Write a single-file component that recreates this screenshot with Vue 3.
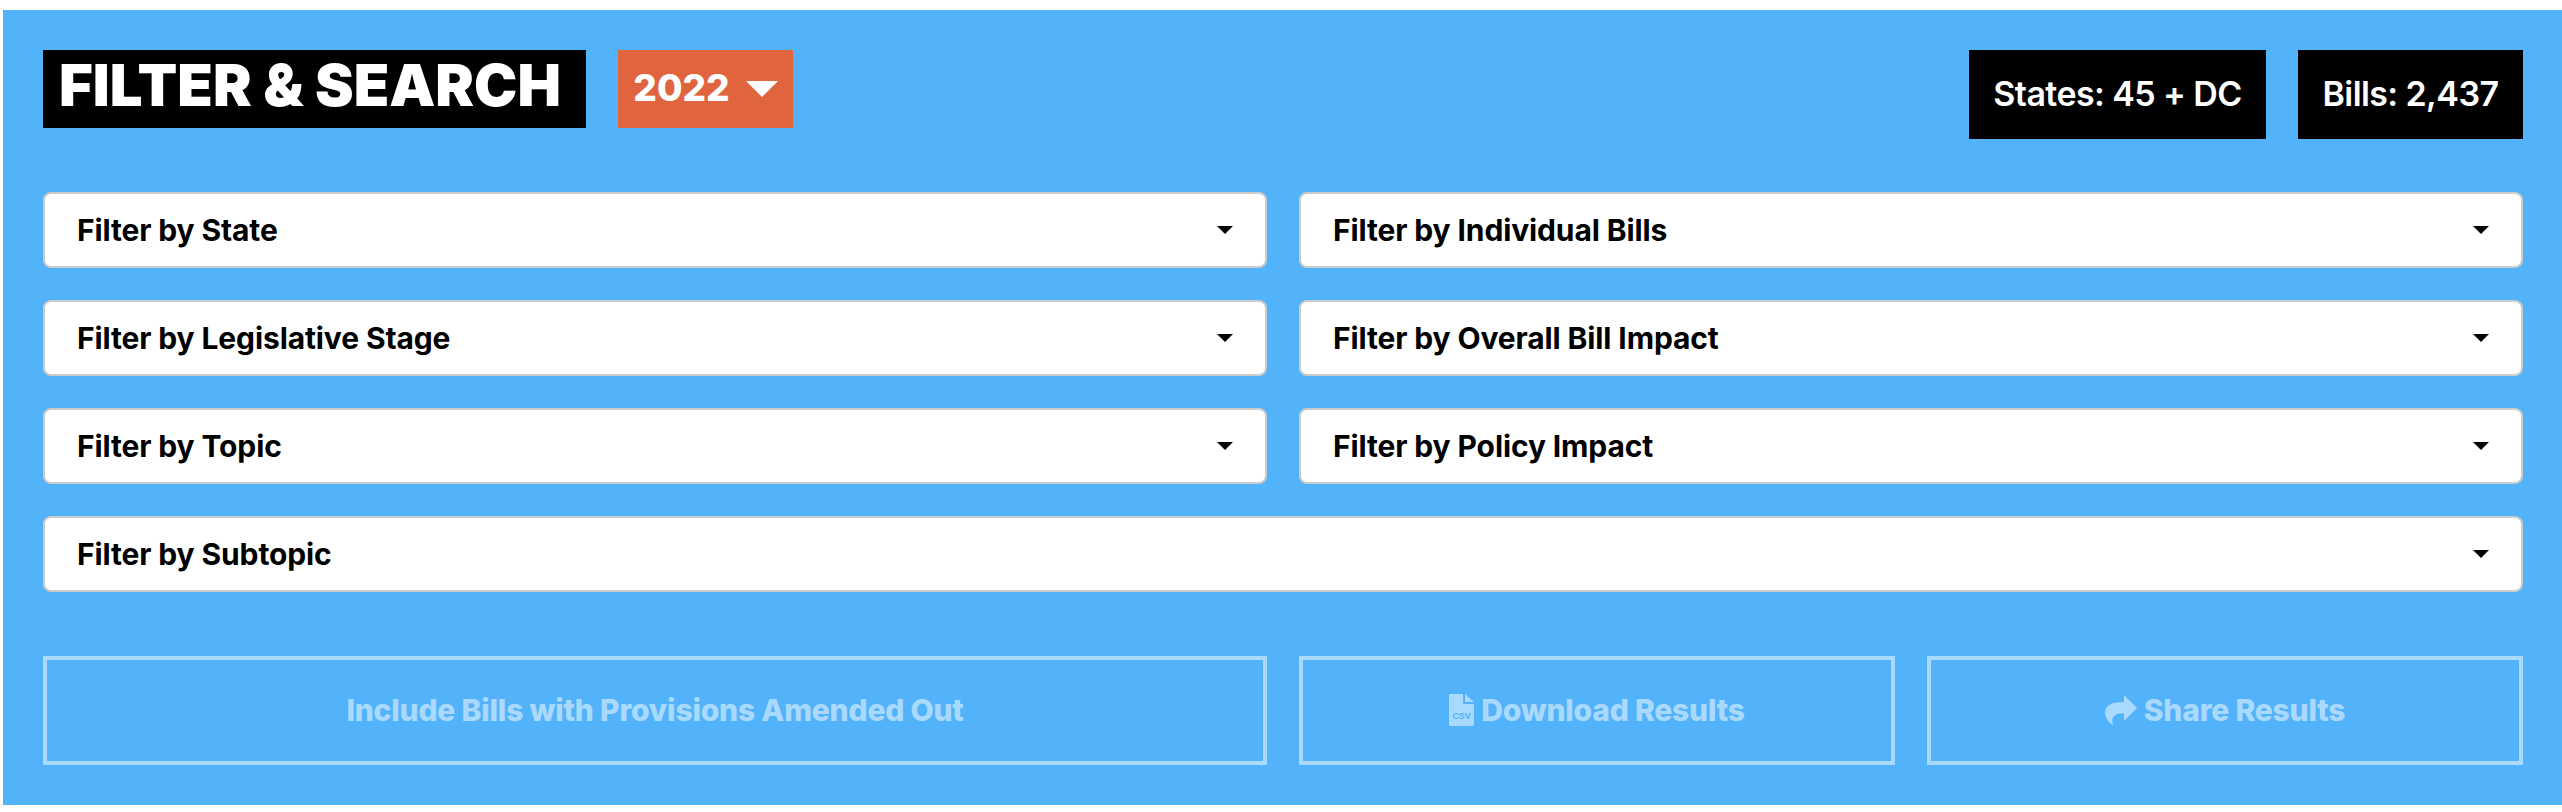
<template>
  <section class="panel">
    <header class="head">
      <h2 class="title">FILTER &amp; SEARCH</h2>
      <button class="year" type="button">
        2022
        <svg class="year-caret" viewBox="0 0 32 16"><path d="M0 0h32L16 16z" /></svg>
      </button>
      <div class="stats">
        <span class="stat stat-states">States: 45 + DC</span>
        <span class="stat stat-bills">Bills: 2,437</span>
      </div>
    </header>

    <div class="filters">
      <div
        v-for="filter in filters"
        :key="filter"
        class="select"
        :class="{ wide: filter === 'Filter by Subtopic' }"
      >
        <span>{{ filter }}</span>
        <svg class="caret" viewBox="0 0 16 8"><path d="M0 0h16L8 8z" /></svg>
      </div>
    </div>

    <div class="actions">
      <button class="action" type="button" disabled>Include Bills with Provisions Amended Out</button>
      <div class="action-pair">
        <button class="action" type="button" disabled>
          <svg class="icon-file" viewBox="0 0 25 32">
            <path class="fill" d="M1 0h13v8.500c0 .8.700 1.500 1.500 1.500H25v20.500c0 .8-.7 1.500-1.500 1.500h-22C.7 32 0 31.300 0 30.500V1.500C0 .7.700 0 1.500 0z" />
            <path class="fill" d="M16 0l9 8h-9z" />
            <text class="csv" x="12.500" y="24.500" text-anchor="middle">CSV</text>
          </svg>
          Download Results
        </button>
        <button class="action" type="button" disabled>
          <svg class="icon-share" viewBox="0 0 32 30">
            <path class="fill" d="M19 0l13 13-13 13v-7.500C12 18 8.500 20 7.500 24 7 26.500 7.500 28.500 8 30 3.500 27.500 0 22.500 0 17.500 0 10 7 7 19 7z" />
          </svg>
          Share Results
        </button>
      </div>
    </div>
  </section>
</template>

<script setup>
const filters = [
  'Filter by State',
  'Filter by Individual Bills',
  'Filter by Legislative Stage',
  'Filter by Overall Bill Impact',
  'Filter by Topic',
  'Filter by Policy Impact',
  'Filter by Subtopic'
]
</script>

<style>
body {
  background: #fff;
}
</style>

<style scoped>
.panel {
  box-sizing: border-box;
  width: 2559px;
  height: 795px;
  margin: 10px 0 0 3px;
  padding: 40px 39px 40px 40px;
  background: #52b3fb;
  font-family: Inter, "Liberation Sans", sans-serif;
}

/* header row */
.head {
  display: flex;
  align-items: flex-start;
  height: 89px;
}
.title {
  box-sizing: border-box;
  width: 543px;
  height: 78px;
  margin: 0;
  padding-left: 16px;
  background: #000;
  color: #fff;
  font-size: 58px;
  font-weight: 900;
  line-height: 71px;
  white-space: nowrap;
}
.year {
  display: flex;
  align-items: center;
  justify-content: center;
  gap: 16px;
  box-sizing: border-box;
  width: 175px;
  height: 78px;
  margin-left: 32px;
  padding: 0 0 3px;
  border: 0;
  background: #e0653e;
  color: #fff;
  font-family: inherit;
  font-size: 37px;
  font-weight: 800;
}
.year-caret {
  width: 32px;
  height: 16px;
  margin-top: 3px;
  fill: #fff;
}
.stats {
  display: flex;
  gap: 32px;
  margin-left: auto;
}
.stat {
  display: flex;
  align-items: center;
  justify-content: center;
  height: 89px;
  padding-bottom: 3px;
  box-sizing: border-box;
  background: #000;
  color: #fff;
  font-size: 34px;
  font-weight: 600;
  letter-spacing: -0.6px;
  white-space: nowrap;
}
.stat-states {
  width: 297px;
}
.stat-bills {
  width: 225px;
}

/* filter dropdowns */
.filters {
  display: grid;
  grid-template-columns: 1fr 1fr;
  gap: 32px;
  margin-top: 53px;
}
.select {
  display: flex;
  align-items: center;
  justify-content: space-between;
  box-sizing: border-box;
  height: 76px;
  padding: 0 32px;
  border: 2px solid #ccc;
  border-radius: 8px;
  background: #fff;
  color: #000;
  font-size: 30px;
  font-weight: 700;
  letter-spacing: -0.12px;
}
.select.wide {
  grid-column: 1 / -1;
}
.caret {
  width: 16px;
  height: 8px;
  fill: #000;
}

/* disabled buttons */
.actions {
  display: grid;
  grid-template-columns: 1fr 1fr;
  gap: 32px;
  margin-top: 64px;
}
.action-pair {
  display: grid;
  grid-template-columns: 1fr 1fr;
  gap: 32px;
}
.action {
  display: flex;
  align-items: center;
  justify-content: center;
  gap: 7px;
  box-sizing: border-box;
  height: 109px;
  padding: 0 0 2px;
  border: 4px solid #fff;
  background: transparent;
  color: #fff;
  font-family: inherit;
  font-size: 30px;
  font-weight: 800;
  letter-spacing: -0.2px;
  opacity: 0.5;
}
.fill {
  fill: #fff;
}
.icon-file {
  width: 25px;
  height: 32px;
}
.icon-share {
  width: 32px;
  height: 30px;
}
.csv {
  fill: #52b3fb;
  font-family: "Liberation Sans", sans-serif;
  font-size: 9px;
  font-weight: 700;
}
</style>
